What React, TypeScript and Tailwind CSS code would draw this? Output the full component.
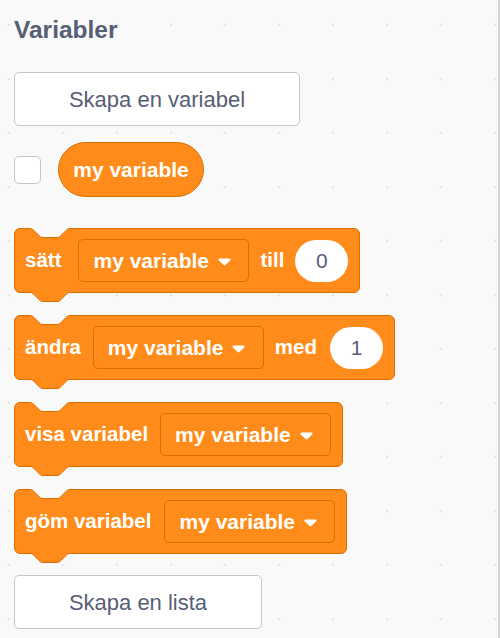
const ORANGE = "#ff8c1a";

function DropArrow() {
  return (
    <svg width="13" height="8" viewBox="0 0 13 8" className="mt-[2px] shrink-0">
      <path
        d="M1.6 0.5h9.8a1.1 1.1 0 0 1 0.8 1.9l-4.9 4.7a1.1 1.1 0 0 1-1.6 0L0.8 2.4A1.1 1.1 0 0 1 1.6 0.5z"
        fill="#fff"
      />
    </svg>
  );
}

const NOTCH =
  "M0 0c2 0 3 1 4 2l5 5c1 1 2 2 4 2h14c2 0 3-1 4-2l5-5c1-1 2-2 4-2";

function Block({ children }: { children: React.ReactNode }) {
  return (
    <div className="relative flex h-[65px] w-fit items-center rounded-[6px] border border-[#db6e00] bg-[#ff8c1a] pl-[10px] pr-[11px] text-[21px] font-bold text-white">
      {/* top notch */}
      <svg
        className="absolute -top-px left-[15px]"
        width="40"
        height="11"
        viewBox="0 0 40 11"
      >
        <rect x="0" y="0" width="40" height="1" fill="#f9f9f9" />
        <path d={NOTCH + "Z"} transform="translate(0 0.5)" fill="#f9f9f9" />
        <path
          d={NOTCH}
          transform="translate(0 0.5)"
          fill="none"
          stroke="#db6e00"
        />
      </svg>
      {children}
      {/* bottom tab */}
      <svg
        className="absolute top-full left-[15px]"
        width="40"
        height="11"
        viewBox="0 0 40 11"
      >
        <rect x="0" y="0" width="40" height="1" fill={ORANGE} />
        <path d={NOTCH + "Z"} transform="translate(0 0.5)" fill={ORANGE} />
        <path
          d={NOTCH}
          transform="translate(0 0.5)"
          fill="none"
          stroke="#db6e00"
        />
      </svg>
    </div>
  );
}

function VarDropdown() {
  return (
    <div className="flex h-[43px] w-[171px] shrink-0 items-center gap-[9px] rounded-[5px] border border-[#db6e00] pl-[14px]">
      <span>my variable</span>
      <DropArrow />
    </div>
  );
}

function NumberInput({ value }: { value: string }) {
  return (
    <div className="flex h-[42px] w-[53px] shrink-0 items-center justify-center rounded-full bg-white text-[21px] font-normal text-[#575e75]">
      {value}
    </div>
  );
}

export default function App() {
  return (
    <div className="h-[638px] w-[500px] overflow-hidden border-r-2 border-[#d6d6d6] bg-[#f9f9f9] bg-[radial-gradient(circle,#e6e6e6_1px,transparent_1.6px)] bg-[size:54px_54px] bg-[position:-18px_-2px] pl-[14px] pt-[16px] font-['Liberation_Sans',Arial,sans-serif]">
      <h2 className="text-[24.5px] font-bold leading-[28px] text-[#575e75]">
        Variabler
      </h2>

      <button className="mt-[28px] flex h-[54px] w-[286px] items-center justify-center rounded-[5px] border border-[#c6c6c6] bg-white text-[22px] text-[#575e75]">
        Skapa en variabel
      </button>

      <div className="mt-[16px] flex items-center gap-[17px]">
        <div className="h-[28px] w-[27px] rounded-[5px] border border-[#c6c6c6] bg-white" />
        <div className="flex h-[55px] w-[146px] items-center justify-center rounded-full border border-[#db6e00] bg-[#ff8c1a] text-[21px] font-bold text-white">
          my variable
        </div>
      </div>

      <div className="mt-[31px] flex flex-col gap-[22px]">
        <Block>
          <span className="mr-[17px] text-[20.5px]">sätt</span>
          <VarDropdown />
          <span className="ml-[11px] mr-[11px] text-[20.5px]">till</span>
          <NumberInput value="0" />
        </Block>
        <Block>
          <span className="mr-[12px] text-[20.5px]">ändra</span>
          <VarDropdown />
          <span className="ml-[11px] mr-[13px] text-[20.5px]">med</span>
          <NumberInput value="1" />
        </Block>
        <Block>
          <span className="mr-[12px] text-[20.5px]">visa variabel</span>
          <VarDropdown />
        </Block>
        <Block>
          <span className="mr-[13px] text-[20.5px]">göm variabel</span>
          <VarDropdown />
        </Block>
      </div>

      <button className="mt-[21px] flex h-[54px] w-[248px] items-center justify-center rounded-[5px] border border-[#c6c6c6] bg-white text-[22px] text-[#575e75]">
        Skapa en lista
      </button>
    </div>
  );
}
